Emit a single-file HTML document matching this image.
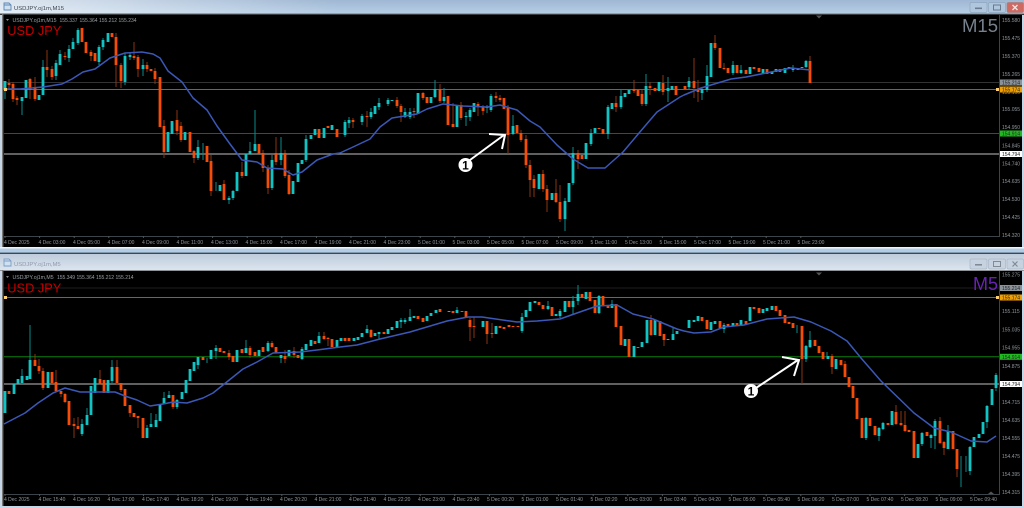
<!DOCTYPE html>
<html><head><meta charset="utf-8"><title>USDJPY</title>
<style>html,body{margin:0;padding:0;background:#000;width:1024px;height:508px;overflow:hidden}svg{display:block;filter:blur(.35px)}
text{font-family:"Liberation Sans",sans-serif}
.a{font-size:5px;fill:#8f969c}.b{font-size:5px;fill:#9aa1a7}.l{font-size:5px;fill:#222}
.w{fill:none;stroke-width:1}.c{fill:none;stroke-width:2.8}
.ma{fill:none;stroke:#3a58b8;stroke-width:1.5;stroke-linejoin:round}
</style></head><body>
<svg width="1024" height="508" viewBox="0 0 1024 508" xmlns="http://www.w3.org/2000/svg">
<defs>
<linearGradient id="t1" x1="0" y1="0" x2="0" y2="1"><stop offset="0" stop-color="#9fb7d3"/><stop offset="1" stop-color="#b7cfe6"/></linearGradient>
<linearGradient id="t2" x1="0" y1="0" x2="0" y2="1"><stop offset="0" stop-color="#bfcbdb"/><stop offset="1" stop-color="#dbe5ef"/></linearGradient>
<linearGradient id="f" x1="0" y1="0" x2="1" y2="0"><stop offset="0" stop-color="#fff" stop-opacity=".65"/><stop offset="1" stop-color="#fff" stop-opacity="0"/></linearGradient>
</defs>
<rect width="1024" height="508" fill="#c5d6e6"/>
<rect width="1024" height="14" fill="url(#t1)"/><rect width="340" height="14" fill="url(#f)"/>
<rect y="13" width="1024" height="1" fill="#9a9ea3"/><rect y="14" width="1024" height="1" fill="#3a3d40"/>
<rect x="3" y="15" width="1019" height="232" fill="#000"/><rect x="2" y="14" width="1.4" height="233" fill="#777"/>
<rect y="247" width="1024" height="1.6" fill="#eef2f6"/><rect y="248.6" width="1024" height="4" fill="#b0cce6"/><rect y="252.6" width="1024" height="1.4" fill="#3a4a55"/>
<rect y="254" width="1024" height="16" fill="url(#t2)"/><rect y="270" width="1024" height="1" fill="#8f9296"/>
<rect x="3" y="271" width="1019" height="235" fill="#000"/><rect x="2" y="270" width="1.4" height="236" fill="#777"/>

<path d="M4 3h5l2 2v5H4zM4 5h7" fill="#cfe0f0" stroke="#5b87b5" stroke-width=".9"/>
<text x="14" y="10" style="font-size:5.9px" fill="#3c4650">USDJPY.oj1m,M15</text>
<path d="M4 259h5l2 2v5H4zM4 261h7" fill="#cfe0f0" stroke="#7b9dc5" stroke-width=".9"/>
<text x="14" y="266" style="font-size:5.9px" fill="#8e9bab">USDJPY.oj1m,M5</text>

<rect x="970" y="2.5" width="17" height="10" rx="1.5" fill="#b0c6dc" stroke="#8ea7c0" stroke-width=".7"/><rect x="975" y="7.5" width="7" height="1.6" fill="#6a7d90"/>
<rect x="988.500" y="2.500" width="17" height="10" rx="1.500" fill="#b0c6dc" stroke="#8ea7c0" stroke-width=".7"/><rect x="993.500" y="5" width="7" height="5" fill="none" stroke="#667a8d"/>
<rect x="1007" y="2.500" width="16.500" height="10" rx="1.500" fill="#cf6a62" stroke="#a9807f" stroke-width=".7"/><path d="M1012.500 5l5 5m0-5l-5 5" stroke="#f2e4e2" stroke-width="1.400"/>
<rect x="970" y="259" width="17" height="10" rx="1.500" fill="#c6d2df" stroke="#aab7c5" stroke-width=".7"/><rect x="975" y="264" width="7" height="1.600" fill="#7f8a95"/>
<rect x="988.500" y="259" width="17" height="10" rx="1.500" fill="#c6d2df" stroke="#aab7c5" stroke-width=".7"/><rect x="993.500" y="261.500" width="7" height="5" fill="none" stroke="#7f8a95"/>
<rect x="1007" y="259" width="16.500" height="10" rx="1.500" fill="#c6d2df" stroke="#aab7c5" stroke-width=".7"/><path d="M1012.500 261.500l5 5m0-5l-5 5" stroke="#7f8a95" stroke-width="1.200"/>

<!-- axes -->
<path d="M999.500 15V236.500H4M999.500 271V494.500H4" fill="none" stroke="#3d454b" stroke-width="1"/>
<path d="M5 236v2M39.600 236v2M74.200 236v2M108.800 236v2M143.400 236v2M178 236v2M212.600 236v2M247.200 236v2M281.800 236v2M316.400 236v2M351 236v2M385.600 236v2M420.200 236v2M454.800 236v2M489.400 236v2M524 236v2M558.600 236v2M593.200 236v2M627.800 236v2M662.400 236v2M697 236v2M731.600 236v2M766.200 236v2M800.800 236v2M5 494v2M39.600 494v2M74.200 494v2M108.800 494v2M143.400 494v2M178 494v2M212.600 494v2M247.200 494v2M281.800 494v2M316.400 494v2M351 494v2M385.600 494v2M420.200 494v2M454.800 494v2M489.400 494v2M524 494v2M558.600 494v2M593.200 494v2M627.800 494v2M662.400 494v2M697 494v2M731.600 494v2M766.200 494v2M800.800 494v2M835.400 494v2M870 494v2M904.600 494v2M939.200 494v2M973.800 494v2" stroke="#555" fill="none"/>

<!-- level lines -->
<path d="M4 82.500H999" stroke="#333" /><path d="M4 89.500H999" stroke="#96600f"/><path d="M4 133.500H999" stroke="#0c6f0c"/><path d="M4 154H999" stroke="#9a9a9a" stroke-width="1.200"/>
<path d="M4 288H999" stroke="#1e1e1e"/><path d="M4 297.500H999" stroke="#96600f"/><path d="M4 356.800H999" stroke="#0c7f0c"/><path d="M4 384H999" stroke="#9a9a9a" stroke-width="1.200"/>

<!-- top wicks -->
<path class="w" stroke="#0b8a8a" d="M5 81V99M22 97V115M43 60V95M56 60V80M60 50V65M69 45V62M73 38V49M78 28V45M99 45V65M103 38V50M125 53V85M130 52V60M143 59V76M255 110V151M281 137V165M198 140V160M203 143V160M216 182V191M229 196V204M233 190V200M250 142V155M272 155V190M306 135V162M345 120V137M349 117V128M362 114V125M371 108V119M379 98V110M388 98V106M405 108V118M410 108V119M435 80V98M444 88V103M466 112V126M470 108V121M487 105V113M491 94V112M513 115V135M565 198V231M573 147V185M591 129V146M608 105V139M621 89V109M646 74V106M668 77V102M689 77V90M702 88V100M707 65V92M733 61V75M741 65V74M793 65V72M806 60V68"/>
<path class="w" stroke="#8a3412" d="M9 79V90M13 82V102M17 96V105M30 78V99M35 77V101M47 50V77M52 66V80M65 52V60M91 50V61M116 33V87M121 63V88M134 42V60M138 55V77M147 62V72M155 68V84M164 120V158M177 110V135M181 122V142M194 150V163M211 155V196M224 180V200M242 162V178M263 150V172M268 165V194M276 137V165M285 150V178M289 170V195M353 118V128M367 111V127M397 97V108M401 104V122M414 108V118M423 92V100M440 84V103M453 103V127M461 102V120M478 102V116M483 105V115M496 92V102M500 95V102M508 105V154M521 130V142M526 135V168M530 160V197M534 175V197M543 170V192M547 185V212M556 179V203M560 185V222M578 150V169M616 96V112M634 80V93M642 90V106M650 82V95M663 75V95M694 58V98M698 80V102M715 35V50M724 63V70M810 56V83"/>
<!-- top bodies -->
<path class="c" stroke="#10c4c4" d="M5 81V90M22 97V101M26 80V98M39 95V100M43 67V95M56 63V76M60 54V65M69 49V58M73 42V49M78 30V43M99 47V62M103 40V47M108 33V42M125 56V82M130 55V57M143 65V69M168 132V152M172 121V134M185 132V140M198 147V158M220 185V191M229 198V200M233 191V198M237 172V191M246 154V176M250 151V154M255 144V151M272 160V188M281 153V160M293 181V194M298 163V182M302 160V164M306 139V160M311 135V139M315 129V135M324 128V138M332 125V130M345 122V135M349 120V123M362 116V122M371 112V117M375 106V114M379 103V107M388 100V104M392 100V101M405 112V117M410 112V117M418 93V114M431 97V103M435 89V97M444 97V101M457 106V127M466 116V117M470 110V117M474 103V112M487 107V108M491 96V110M513 126V134M539 174V189M552 193V200M565 201V219M569 183V202M573 153V183M586 143V159M591 133V144M595 128V133M608 107V134M612 103V109M621 96V107M625 93V97M629 90V94M646 86V104M659 82V91M668 88V91M672 86V90M689 81V87M702 89V93M707 76V90M711 43V77M733 65V73M741 70V73M750 67V74M763 69V73M772 72V74M776 69V72M785 68V73M789 67V69M793 68V70M798 68V70M802 67V68M806 61V67"/>
<path class="c" stroke="#f54d08" d="M9 83V85M13 84V99M17 98V100M30 79V90M35 87V99M47 67V70M52 69V77M65 56V57M82 28V42M86 42V53M91 52V56M95 53V61M112 33V37M116 37V65M121 65V81M134 56V58M138 57V69M147 65V69M151 69V71M155 71V79M160 77V127M164 126V152M177 120V131M181 126V140M190 132V152M194 151V158M207 146V162M211 161V191M224 184V200M242 172V176M259 144V154M263 153V168M268 168V188M276 153V162M285 153V176M289 175V194M319 129V138M328 126V128M337 129V137M353 120V122M367 116V117M397 100V106M401 106V112M414 111V112M423 93V98M427 97V103M440 89V101M448 96V125M453 124V127M461 105V118M478 104V107M483 107V111M496 96V98M500 98V100M504 98V109M508 108V135M517 125V133M521 133V140M526 139V165M530 165V180M534 179V188M543 174V189M547 189V200M556 193V202M560 202V219M578 153V159M582 155V159M599 128V129M603 129V134M616 103V107M634 89V91M638 90V96M642 94V104M650 86V88M655 88V91M663 83V92M676 86V95M685 86V89M694 81V88M698 89V92M715 43V48M720 48V68M724 68V69M728 68V73M737 65V73M746 70V74M754 67V69M759 68V72M767 69V74M780 69V72M810 61V83"/>
<polyline class="ma" points="5,89 20,89 43,87 62,84 72,79 83,72 95,69 110,58 125,53 142,52 153,54 160,58 168,71 182,82 193,98 207,110 217,126 230,144 242,160 257,162 267,168 283,169 293,175 302,172 317,160 333,154 340,153 353,147 370,139 380,127 392,118 417,114 427,109 443,104 463,106 487,107 500,105 517,110 530,121 540,127 557,145 573,159 588,168 605,168 623,152 645,126 657,112 680,97 684,95 701,88 731,79 746,77 771,72 791,68 810,70"/>

<!-- bottom wicks -->
<path class="w" stroke="#0b8a8a" d="M30 325V379M22 369V383M87 408V425M82 419V436M112 360V383M147 425V438M151 413V427M156 414V427M164 392V404M169 391V398M177 399V409M198 357V369M207 358V363M216 345V359M246 340V353M268 341V352M281 355V363M302 347V360M319 332V343M367 325V333M379 332V339M401 318V328M405 318V324M410 309V321M457 307V313M522 313V333M548 301V310M560 309V318M578 285V305M573 296V314M599 295V314M612 300V308M673 327V340M724 323V333M797 325V333M806 345V362M810 331V348M827 352V359M961 456V487M966 456V472M931 434V448M935 419V449M948 425V449M970 446V475M987 405V428M996 373V391M866 417V440M879 427V441M922 432V446M883 422V430"/>
<path class="w" stroke="#8a3412" d="M35 354V366M39 359V374M43 368V390M56 370V392M61 391V397M65 393V403M74 418V438M78 417V429M100 370V385M117 360V385M121 383V392M130 405V417M138 416V428M173 395V409M229 350V360M250 346V358M272 341V348M285 350V363M294 347V358M324 332V340M328 337V346M371 329V338M470 318V341M474 317V338M487 321V344M492 323V338M651 315V336M664 334V346M802 326V384M845 361V377M832 354V374M896 405V425M905 411V432M901 411V426M940 417V444M944 441V455M957 449V477"/>
<!-- bottom bodies -->
<path class="c" stroke="#10c4c4" d="M5 391V413M14 384V394M18 379V384M22 376V383M27 376V380M30 360V379M48 372V388M82 424V434M87 415V425M91 386V415M95 378V393M108 380V393M112 367V381M147 428V438M151 424V427M156 420V427M160 404V421M164 398V404M169 395V398M177 400V407M182 392V399M186 380V393M190 369V381M194 362V371M198 357V365M211 350V359M216 348V351M237 350V362M246 348V353M259 350V356M268 343V351M281 355V358M289 350V356M302 349V359M306 344V350M311 340V346M319 336V343M337 340V347M341 338V341M354 338V341M358 337V340M362 333V337M367 329V333M375 333V336M379 332V334M388 329V334M392 327V330M397 321V328M401 320V322M405 320V322M410 317V321M414 316V318M427 316V321M431 313V316M436 310V313M449 311V312M457 310V313M483 321V327M496 326V334M522 317V331M526 310V317M530 302V311M535 301V303M548 306V309M556 314V316M560 311V316M565 301V312M573 301V307M578 294V301M586 292V299M599 296V313M612 304V308M625 339V346M634 346V357M642 342V347M647 320V343M655 320V335M668 339V340M673 334V340M677 331V334M689 320V328M694 320V322M698 316V321M711 322V330M715 321V324M724 325V329M733 323V326M741 320V326M750 307V321M763 309V313M767 308V311M772 306V310M806 346V359M810 340V347M828 356V359M836 359V369M866 418V438M879 428V436M883 423V429M892 411V425M918 444V458M922 433V444M931 435V438M935 421V436M948 431V449M970 447V471M974 437V447M979 434V438M983 422V434M987 406V422M992 389V405M996 375V388"/>
<path class="c" stroke="#f54d08" d="M9 391V394M35 360V366M39 366V371M43 371V388M52 372V383M56 382V391M61 391V394M65 394V402M69 401V425M74 424V426M78 426V429M100 379V384M104 380V393M117 367V383M121 383V390M125 389V406M130 405V413M134 413V417M138 416V418M143 418V438M173 395V407M203 357V360M220 348V352M224 351V353M229 353V357M233 356V362M242 349V353M250 348V355M255 352V356M263 347V352M272 343V347M276 347V353M285 356V359M294 351V355M298 355V358M315 341V344M324 336V339M328 338V339M332 339V347M345 338V341M349 338V341M371 330V337M384 332V334M418 316V319M423 318V322M440 309V312M453 311V313M462 311V312M466 311V317M470 320V327M474 326V327M487 321V334M492 333V334M500 326V328M504 327V329M509 325V327M513 326V327M518 326V327M539 302V305M543 305V309M552 307V316M569 301V307M582 294V298M590 292V301M595 300V313M603 296V306M608 306V308M616 304V327M621 326V345M629 339V357M638 347V348M651 320V335M660 321V336M664 334V340M702 317V321M707 320V329M720 321V328M728 324V326M737 323V326M746 321V324M754 307V309M759 308V313M776 306V311M780 310V316M785 315V323M789 322V324M793 323V328M802 326V359M815 340V346M819 346V353M823 352V359M832 356V367M841 360V365M845 364V377M849 377V387M853 386V398M857 398V419M862 418V438M870 418V426M875 426V435M888 423V425M896 412V424M901 423V425M905 425V431M909 430V432M914 431V458M927 432V436M940 421V443M944 442V448M953 431V449M957 449V469"/>
<polyline class="ma" points="4,424 25,413 38,403 53,393 65,388 80,392 100,392 115,392 125,396 137,400 150,406 163,404 173,402 187,403 203,398 213,393 228,381 243,369 257,362 273,353 300,352 317,350 340,347 357,345 380,339 410,332 447,321 468,317 482,317 517,322 537,321 560,319 577,313 597,306 617,305 633,314 653,319 677,329 684,331 694,333 711,332 724,327 744,325 767,319 794,317 811,322 831,331 847,341 861,358 881,381 914,413 934,428 951,432 971,441 987,442 996,436"/>

<!-- markers -->
<rect x="4" y="88" width="3" height="3" fill="#ffd070"/><rect x="996" y="88" width="3" height="3" fill="#ffd070"/>
<rect x="4" y="296" width="3" height="3" fill="#ffd070"/><rect x="996" y="296" width="3" height="3" fill="#ffd070"/>
<path d="M816 15.500h6l-3 3z" fill="#555"/><path d="M816 272.500h6l-3 3z" fill="#555"/><path d="M988 494l3-2.500 3 2.500z" fill="#555"/>

<!-- arrows -->
<g fill="none" stroke="#fff" stroke-width="2"><path d="M470 160L504 135M489 134L505 135L502 149"/><path d="M756 388L798 360M782 357L799 360L794 376"/></g>
<circle cx="465.500" cy="165" r="7" fill="#fff"/><text x="465.500" y="169.500" text-anchor="middle" style="font-size:12px;font-weight:bold" fill="#000">1</text>
<circle cx="751" cy="391" r="7" fill="#fff"/><text x="751" y="395.500" text-anchor="middle" style="font-size:12px;font-weight:bold" fill="#000">1</text>

<!-- headers -->
<path d="M6 19h3l-1.500 2z" fill="#888"/><text class="b" x="12.500" y="22" style="font-size:5.2px">USDJPY.oj1m,M15</text><text class="b" x="59.500" y="22">155.337</text><text class="b" x="79.500" y="22">155.364</text><text class="b" x="99" y="22">155.212</text><text class="b" x="118.500" y="22">155.234</text>
<path d="M6 276h3l-1.500 2z" fill="#888"/><text class="b" x="12.500" y="279" style="font-size:5.2px">USDJPY.oj1m,M5</text><text class="b" x="57" y="279">155.349</text><text class="b" x="76.500" y="279">155.364</text><text class="b" x="96" y="279">155.212</text><text class="b" x="115.500" y="279">155.214</text>

<text x="7.300" y="35" style="font-size:12.800px" fill="#c40000">USD JPY</text>
<text x="7.300" y="292.500" style="font-size:12.800px" fill="#c40000">USD JPY</text>
<text x="998" y="32" text-anchor="end" style="font-size:18.500px" fill="#76818d">M15</text>
<text x="998" y="289.800" text-anchor="end" style="font-size:18px" fill="#6a22b4">M5</text>

<!-- price axis -->
<text class="a" x="1002" y="22">155.580</text><text class="a" x="1002" y="40">155.475</text><text class="a" x="1002" y="58">155.370</text><text class="a" x="1002" y="76">155.265</text><text class="a" x="1002" y="94">155.160</text><text class="a" x="1002" y="111">155.055</text><text class="a" x="1002" y="129">154.950</text><text class="a" x="1002" y="147.500">154.845</text><text class="a" x="1002" y="165.500">154.740</text><text class="a" x="1002" y="183">154.635</text><text class="a" x="1002" y="201">154.530</text><text class="a" x="1002" y="219">154.425</text><text class="a" x="1002" y="237">154.320</text>
<text class="a" x="1002" y="276.500">155.275</text><text class="a" x="1002" y="313">155.115</text><text class="a" x="1002" y="331.500">155.035</text><text class="a" x="1002" y="349.500">154.955</text><text class="a" x="1002" y="368">154.875</text><text class="a" x="1002" y="404">154.715</text><text class="a" x="1002" y="422">154.635</text><text class="a" x="1002" y="440">154.555</text><text class="a" x="1002" y="458">154.475</text><text class="a" x="1002" y="476">154.395</text><text class="a" x="1002" y="494">154.315</text>
<rect x="1000" y="79.500" width="22" height="6" fill="#8a929a"/><text class="l" x="1002" y="84.500">155.214</text>
<rect x="1000" y="86.500" width="22" height="6" fill="#f0a000"/><text class="l" x="1002" y="91.500">155.174</text>
<rect x="1000" y="130.500" width="22" height="6" fill="#22b822"/><text class="l" x="1002" y="135.500">154.914</text>
<rect x="1000" y="151" width="22" height="6" fill="#fff"/><text class="l" x="1002" y="156">154.794</text>
<rect x="1000" y="285" width="22" height="6" fill="#8a929a"/><text class="l" x="1002" y="290">155.214</text>
<rect x="1000" y="294.500" width="22" height="6" fill="#f0a000"/><text class="l" x="1002" y="299.500">155.174</text>
<rect x="1000" y="353.800" width="22" height="6" fill="#22b822"/><text class="l" x="1002" y="358.800">154.914</text>
<rect x="1000" y="381" width="22" height="6" fill="#fff"/><text class="l" x="1002" y="386">154.794</text>

<!-- time axis top -->
<text class="a" x="4" y="244">4 Dec 2025</text><text class="a" x="38.500" y="244">4 Dec 03:00</text><text class="a" x="73" y="244">4 Dec 05:00</text><text class="a" x="107.500" y="244">4 Dec 07:00</text><text class="a" x="142" y="244">4 Dec 09:00</text><text class="a" x="176.500" y="244">4 Dec 11:00</text><text class="a" x="211" y="244">4 Dec 13:00</text><text class="a" x="245.500" y="244">4 Dec 15:00</text><text class="a" x="280" y="244">4 Dec 17:00</text><text class="a" x="314.500" y="244">4 Dec 19:00</text><text class="a" x="349" y="244">4 Dec 21:00</text><text class="a" x="383.500" y="244">4 Dec 23:00</text><text class="a" x="418" y="244">5 Dec 01:00</text><text class="a" x="452.500" y="244">5 Dec 03:00</text><text class="a" x="487" y="244">5 Dec 05:00</text><text class="a" x="521.500" y="244">5 Dec 07:00</text><text class="a" x="556" y="244">5 Dec 09:00</text><text class="a" x="590.500" y="244">5 Dec 11:00</text><text class="a" x="625" y="244">5 Dec 13:00</text><text class="a" x="659.500" y="244">5 Dec 15:00</text><text class="a" x="694" y="244">5 Dec 17:00</text><text class="a" x="728.500" y="244">5 Dec 19:00</text><text class="a" x="763" y="244">5 Dec 21:00</text><text class="a" x="797.500" y="244">5 Dec 23:00</text>
<!-- time axis bottom -->
<text class="a" x="4" y="501">4 Dec 2025</text><text class="a" x="38.500" y="501">4 Dec 15:40</text><text class="a" x="73" y="501">4 Dec 16:20</text><text class="a" x="107.500" y="501">4 Dec 17:00</text><text class="a" x="142" y="501">4 Dec 17:40</text><text class="a" x="176.500" y="501">4 Dec 18:20</text><text class="a" x="211" y="501">4 Dec 19:00</text><text class="a" x="245.500" y="501">4 Dec 19:40</text><text class="a" x="280" y="501">4 Dec 20:20</text><text class="a" x="314.500" y="501">4 Dec 21:00</text><text class="a" x="349" y="501">4 Dec 21:40</text><text class="a" x="383.500" y="501">4 Dec 22:20</text><text class="a" x="418" y="501">4 Dec 23:00</text><text class="a" x="452.500" y="501">4 Dec 23:40</text><text class="a" x="487" y="501">5 Dec 00:20</text><text class="a" x="521.500" y="501">5 Dec 01:00</text><text class="a" x="556" y="501">5 Dec 01:40</text><text class="a" x="590.500" y="501">5 Dec 02:20</text><text class="a" x="625" y="501">5 Dec 03:00</text><text class="a" x="659.500" y="501">5 Dec 03:40</text><text class="a" x="694" y="501">5 Dec 04:20</text><text class="a" x="728.500" y="501">5 Dec 05:00</text><text class="a" x="763" y="501">5 Dec 05:40</text><text class="a" x="797.500" y="501">5 Dec 06:20</text><text class="a" x="832" y="501">5 Dec 07:00</text><text class="a" x="866.500" y="501">5 Dec 07:40</text><text class="a" x="901" y="501">5 Dec 08:20</text><text class="a" x="935.500" y="501">5 Dec 09:00</text><text class="a" x="970" y="501">5 Dec 09:40</text>
</svg>
</body></html>
